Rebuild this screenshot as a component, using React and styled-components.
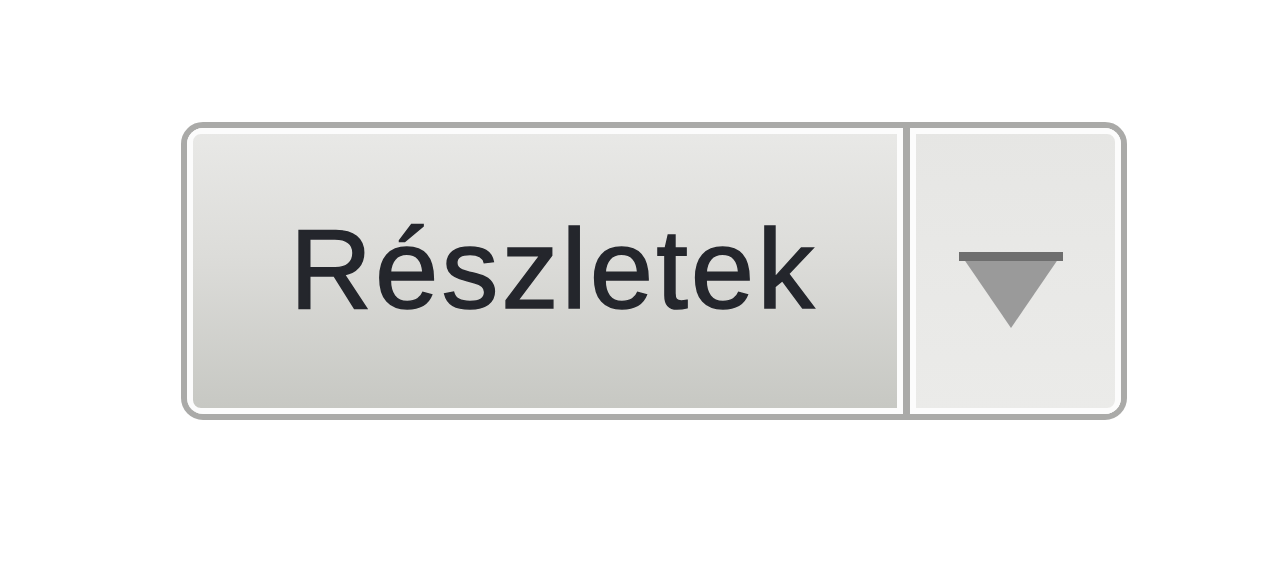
import React from 'react';
import styled, {createGlobalStyle} from 'styled-components';

const GlobalStyle = createGlobalStyle`
  html, body {
    margin: 0;
    padding: 0;
    background: #fff;
  }
  body {
    font-family: "Liberation Sans", Arial, sans-serif;
  }
`;

const Page = styled.div`
  width: 1280px;
  height: 564px;
  box-sizing: border-box;
  padding: 122px 0 0 181px;
  background: #fff;
`;

// split button: main action + caret toggle
const SplitButton = styled.div`
  display: inline-flex;
  height: 298px;
  box-sizing: border-box;
  border: 6px solid #aaaaa8;
  border-radius: 22px;
  overflow: hidden;
  background: #fff;
`;

const MainButton = styled.button`
  display: flex;
  align-items: center;
  justify-content: center;
  width: 716px;
  height: 100%;
  box-sizing: border-box;
  padding: 0 0 6px 17px;
  margin: 0;
  border: none;
  background: linear-gradient(to bottom, #e9e9e7 0%, #dcdcd9 45%, #c6c7c2 100%);
  box-shadow: inset 0 0 0 6px #fcfcfc;
  border-radius: 14px 0 0 14px;
  font-family: "Liberation Sans", Arial, sans-serif;
  font-size: 114px;
  color: #24262c;
  letter-spacing: 3px;
  -webkit-text-stroke: 1.5px #24262c;
  cursor: pointer;
`;

const ToggleButton = styled.button`
  display: flex;
  align-items: center;
  justify-content: center;
  width: 218px;
  height: 100%;
  box-sizing: border-box;
  padding: 38px 10px 0 0;
  margin: 0;
  border: none;
  border-left: 7px solid #aaaaa8;
  background: linear-gradient(to bottom, #e6e6e4 0%, #ebebe9 100%);
  box-shadow: inset 0 0 0 6px #fcfcfc;
  border-radius: 0 14px 14px 0;
  cursor: pointer;
`;

const Caret = () => (
  <svg width="104" height="76" viewBox="0 0 104 76">
    <polygon points="0,0 104,0 52,76" fill="#9a9a9a"/>
    <rect x="0" y="0" width="104" height="9" fill="#6e6e6e"/>
  </svg>
);

export default function App() {
  return (
    <Page>
      <GlobalStyle/>
      <SplitButton>
        <MainButton>Részletek</MainButton>
        <ToggleButton>
          <Caret/>
        </ToggleButton>
      </SplitButton>
    </Page>
  );
}
